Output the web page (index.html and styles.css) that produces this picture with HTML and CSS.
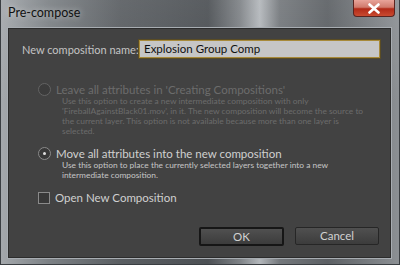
FILE: index.html
```html
<!DOCTYPE html>
<html lang="en">

<head>
    <meta charset="UTF-8">
    <title>Pre-compose</title>
    <link rel="stylesheet" href="styles.css">
</head>

<body>
    <div class="window">
        <!-- Title bar -->
        <div class="titlebar">
            <span class="title">Pre-compose</span>
            <div class="close-button">
                <svg width="14" height="11" viewBox="0 0 14 11">
                    <path d="M2.5 1.5 L11.5 9.5 M11.5 1.5 L2.5 9.5" stroke="#fff" stroke-width="2.6" stroke-linecap="round"/>
                </svg>
            </div>
        </div>

        <div class="panel">
            <div class="name-row">
                <label class="name-label">New composition name:</label>
                <div class="name-input">Explosion Group Comp</div>
            </div>

            <div class="option disabled">
                <div class="option-row">
                    <span class="radio"></span>
                    <span class="option-title">Leave all attributes in 'Creating Compositions'</span>
                </div>
                <div class="option-desc">Use this option to create a new intermediate composition with only<br>
                    'FireballAgainstBlack01.mov', in it. The new composition will become the source to<br>
                    the current layer. This option is not available because more than one layer is<br>
                    selected.</div>
            </div>

            <div class="option">
                <div class="option-row">
                    <span class="radio checked"></span>
                    <span class="option-title">Move all attributes into the new composition</span>
                </div>
                <div class="option-desc">Use this option to place the currently selected layers together into a new<br>
                    intermediate composition.</div>
            </div>

            <div class="check-row">
                <span class="checkbox"></span>
                <span class="option-title">Open New Composition</span>
            </div>

            <div class="buttons">
                <div class="button default">OK</div>
                <div class="button">Cancel</div>
            </div>
        </div>
    </div>
</body>

</html>
```

FILE: styles.css
```css
body {
    margin: 0;
    width: 400px;
    height: 265px;
    overflow: hidden;
    font-family: Lato, "Noto Sans", sans-serif;
}

.window {
    display: flex;
    flex-direction: column;
    height: 265px;
    box-sizing: border-box;
    padding: 0 8px 6px 7px;
    background:
        linear-gradient(180deg, rgba(255, 255, 255, 0.08), rgba(0, 0, 0, 0) 40%),
        linear-gradient(90deg, #a4a8ac 0%, #7c8185 12%, #5a5e62 30%, #4c5054 52%, #7e8286 60%, #b3b7bb 65%, #74787c 70%, #5c6064 82%, #8c9094 100%);
    border: 1px solid #3a3e42;
    border-top: none;
}

.titlebar {
    display: flex;
    justify-content: space-between;
    align-items: flex-start;
    height: 28px;
    flex-shrink: 0;
}

.title {
    font-size: 12.5px;
    color: #111;
    line-height: 28px;
    margin-top: -1px;
    text-shadow: 0 0 6px rgba(255, 255, 255, 0.6);
}

.close-button {
    width: 42px;
    height: 17px;
    margin-right: -4px;
    box-sizing: border-box;
    border: 1px solid #5a2420;
    border-top: none;
    border-radius: 0 0 4px 4px;
    background: linear-gradient(180deg, #e8a49a 0%, #d07a6c 45%, #b22a18 55%, #c94a30 100%);
    display: flex;
    justify-content: center;
    align-items: center;
}

.panel {
    flex: 1;
    display: flex;
    flex-direction: column;
    background-color: #424242;
    border: 1px solid #2c2c2c;
    outline: 1px solid #a8adb2;
    padding: 11px 10px 0 13px;
}

.name-row {
    display: flex;
    align-items: center;
    justify-content: space-between;
}

.name-label {
    font-size: 11px;
    color: #c4c4c4;
    white-space: nowrap;
}

.name-input {
    width: 241px;
    height: 18px;
    flex-shrink: 0;
    box-sizing: border-box;
    border: 1px solid #a88a3a;
    outline: 1px solid #5a4c24;
    background-color: #c6c6c6;
    color: #111;
    font-size: 11.5px;
    line-height: 16px;
    padding-left: 4px;
}

.option {
    margin-top: 25px;
    padding-left: 16px;
}

.option + .option {
    margin-top: 11px;
}

.option-row,
.check-row {
    display: flex;
    align-items: center;
    gap: 5px;
    height: 13px;
}

.check-row {
    margin-top: 11px;
    padding-left: 16px;
}

.option-title {
    font-size: 11.5px;
    color: #d0d0d0;
    white-space: nowrap;
}

.option-desc {
    padding-left: 24px;
    font-size: 8.4px;
    line-height: 10px;
    color: #c6c6c6;
    white-space: nowrap;
}

.disabled .option-title,
.disabled .option-desc {
    color: #6c6c6c;
}

.radio {
    width: 11px;
    height: 11px;
    border-radius: 50%;
    border: 1px solid #8a8a8a;
    background-color: #383838;
    display: flex;
    justify-content: center;
    align-items: center;
    flex-shrink: 0;
}

.disabled .radio {
    border-color: #636363;
    background-color: #3c3c3c;
}

.radio.checked::after {
    content: "";
    width: 3px;
    height: 3px;
    border-radius: 50%;
    background-color: #e0e0e0;
}

.checkbox {
    width: 10px;
    height: 10px;
    border: 1px solid #8a8a8a;
    background-color: #383838;
    flex-shrink: 0;
}

.buttons {
    display: flex;
    justify-content: flex-end;
    gap: 11px;
    margin-top: 23px;
    padding-right: 1px;
}

.button {
    width: 82px;
    height: 16px;
    border: 1px solid #262626;
    border-radius: 2px;
    background: linear-gradient(180deg, #505050 0%, #464646 50%, #3c3c3c 100%);
    color: #d2d2d2;
    font-size: 11.5px;
    line-height: 16px;
    text-align: center;
}

.button.default {
    width: 81px;
    border: 2px solid #161616;
    height: 15px;
    line-height: 15px;
}
```
